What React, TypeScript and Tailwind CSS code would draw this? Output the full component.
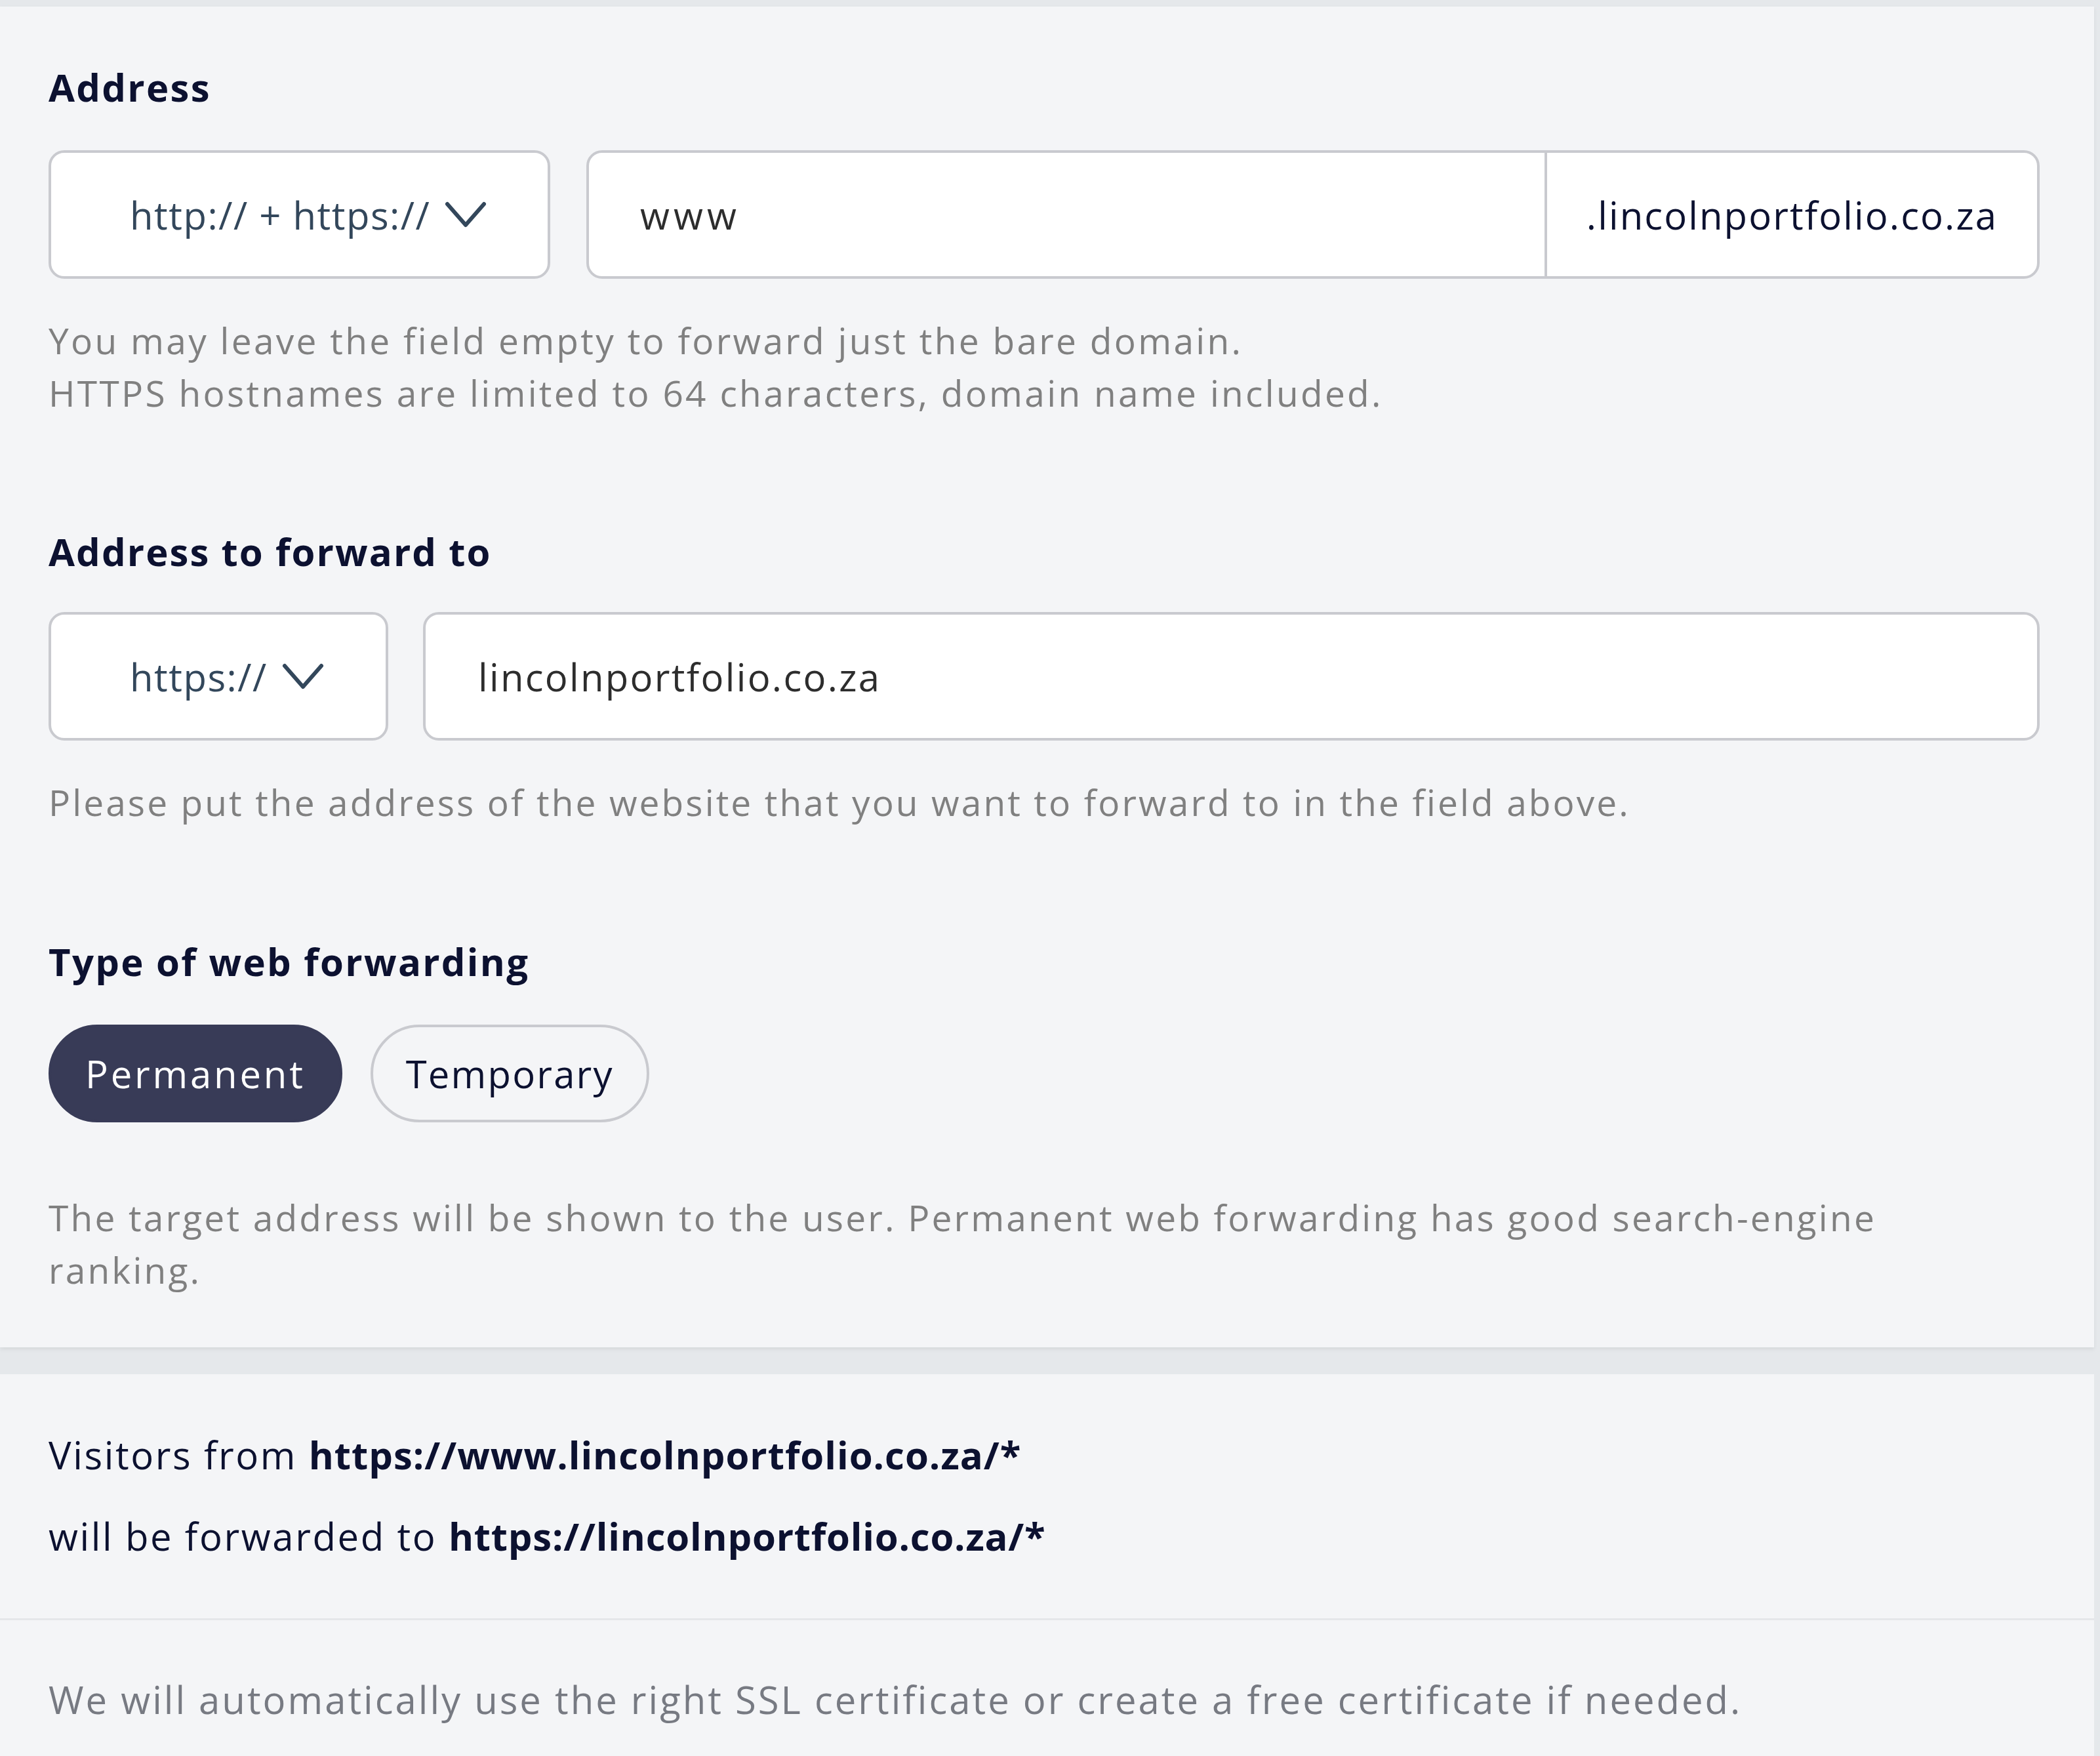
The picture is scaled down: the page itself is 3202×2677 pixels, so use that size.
import React, { useState } from "react";

const Chevron: React.FC = () => (
    <svg width="64" height="42" viewBox="0 0 64 42" fill="none" className="shrink-0">
        <path d="M4 5 L32 37 L60 5" stroke="#33475b" strokeWidth="6" strokeLinecap="round" strokeLinejoin="round" />
    </svg>
);

const App: React.FC = () => {
    const [type, setType] = useState<"permanent" | "temporary">("permanent");

    return (
        <div className="min-h-screen bg-[#e5e8eb] pt-[10px] pr-[9px] font-['Open_Sans',sans-serif]">
            {/* Settings card */}
            <div className="bg-[#f4f5f7] pl-[74px] pr-[83px] pt-[87px] pb-[78px] shadow-[0_3px_6px_rgba(0,0,0,0.07)]">
                <h2 className="text-[58px] leading-[72px] font-bold tracking-[2.3px] text-[#0c1130]">Address</h2>

                <div className="mt-[60px] flex gap-[55px]">
                    <button className="h-[196px] w-[765px] flex items-center gap-[22px] pl-[120px] bg-white border-4 border-[#c9cacf] rounded-[24px] text-[58px] tracking-[1.5px] text-[#33475b]">
                        <span>http:// + https://</span>
                        <Chevron />
                    </button>
                    <div className="h-[196px] flex-1 flex bg-white border-4 border-[#c9cacf] rounded-[24px] overflow-hidden">
                        <div className="flex-1 flex items-center pl-[78px] text-[58px] tracking-[6px] text-[#2d2d2d]">www</div>
                        <div className="flex items-center px-[60px] border-l-4 border-[#c9cacf] text-[58px] tracking-[2.1px] text-[#0c1130]">
                            .lincolnportfolio.co.za
                        </div>
                    </div>
                </div>

                <p className="mt-[54px] text-[55px] leading-[80px] tracking-[3.3px] text-[#808080]">
                    You may leave the field empty to forward just the bare domain.
                    <br />
                    HTTPS hostnames are limited to 64 characters, domain name included.
                </p>

                <h2 className="mt-[166px] text-[58px] leading-[72px] font-bold tracking-[2.1px] text-[#0c1130]">Address to forward to</h2>

                <div className="mt-[56px] flex gap-[53px]">
                    <button className="h-[196px] w-[518px] flex items-center gap-[22px] pl-[120px] bg-white border-4 border-[#c9cacf] rounded-[24px] text-[58px] tracking-[1.5px] text-[#33475b]">
                        <span>https://</span>
                        <Chevron />
                    </button>
                    <div className="h-[196px] flex-1 flex items-center pl-[80px] bg-white border-4 border-[#c9cacf] rounded-[24px] text-[58px] tracking-[2.3px] text-[#2d2d2d]">
                        lincolnportfolio.co.za
                    </div>
                </div>

                <p className="mt-[54px] text-[55px] leading-[80px] tracking-[3.1px] text-[#808080]">
                    Please put the address of the website that you want to forward to in the field above.
                </p>

                <h2 className="mt-[167px] text-[58px] leading-[72px] font-bold tracking-[2.3px] text-[#0c1130]">Type of web forwarding</h2>

                <div className="mt-[60px] flex gap-[43px]">
                    <button
                        onClick={() => setType("permanent")}
                        className={
                            type === "permanent"
                                ? "h-[149px] px-[52px] rounded-full bg-[#383b57] border-4 border-[#383b57] text-white text-[58px] tracking-[3.8px]"
                                : "h-[149px] px-[52px] rounded-full border-4 border-[#c9cacf] text-[#0c1130] text-[58px] tracking-[3.8px]"
                        }
                    >
                        Permanent
                    </button>
                    <button
                        onClick={() => setType("temporary")}
                        className={
                            type === "temporary"
                                ? "h-[149px] px-[50px] rounded-full bg-[#383b57] border-4 border-[#383b57] text-white text-[58px] tracking-[2.2px]"
                                : "h-[149px] px-[50px] rounded-full border-4 border-[#c9cacf] text-[#0c1130] text-[58px] tracking-[2.2px]"
                        }
                    >
                        Temporary
                    </button>
                </div>

                <p className="mt-[105px] text-[55px] leading-[80px] tracking-[3.2px] text-[#808080]">
                    The target address will be shown to the user. Permanent web forwarding has good search-engine
                    <br />
                    ranking.
                </p>
            </div>

            {/* Summary card */}
            <div className="mt-[41px] bg-[#f4f5f7]">
                <div className="pl-[74px] pt-[83px] pb-[85px] text-[58px] leading-[80px] tracking-[2.6px] text-[#0c1130]">
                    <p>
                        Visitors from <span className="font-bold tracking-[1px]">https://www.lincolnportfolio.co.za/*</span>
                    </p>
                    <p className="mt-[44px]">
                        will be forwarded to <span className="font-bold tracking-[0.8px]">https://lincolnportfolio.co.za/*</span>
                    </p>
                </div>
                <div className="h-[3px] bg-[#e5e7ea]" />
                <p className="pl-[74px] pt-[81px] pb-[48px] text-[58px] leading-[80px] tracking-[3px] text-[#777a82]">
                    We will automatically use the right SSL certificate or create a free certificate if needed.
                </p>
            </div>
        </div>
    );
};

export default App;
